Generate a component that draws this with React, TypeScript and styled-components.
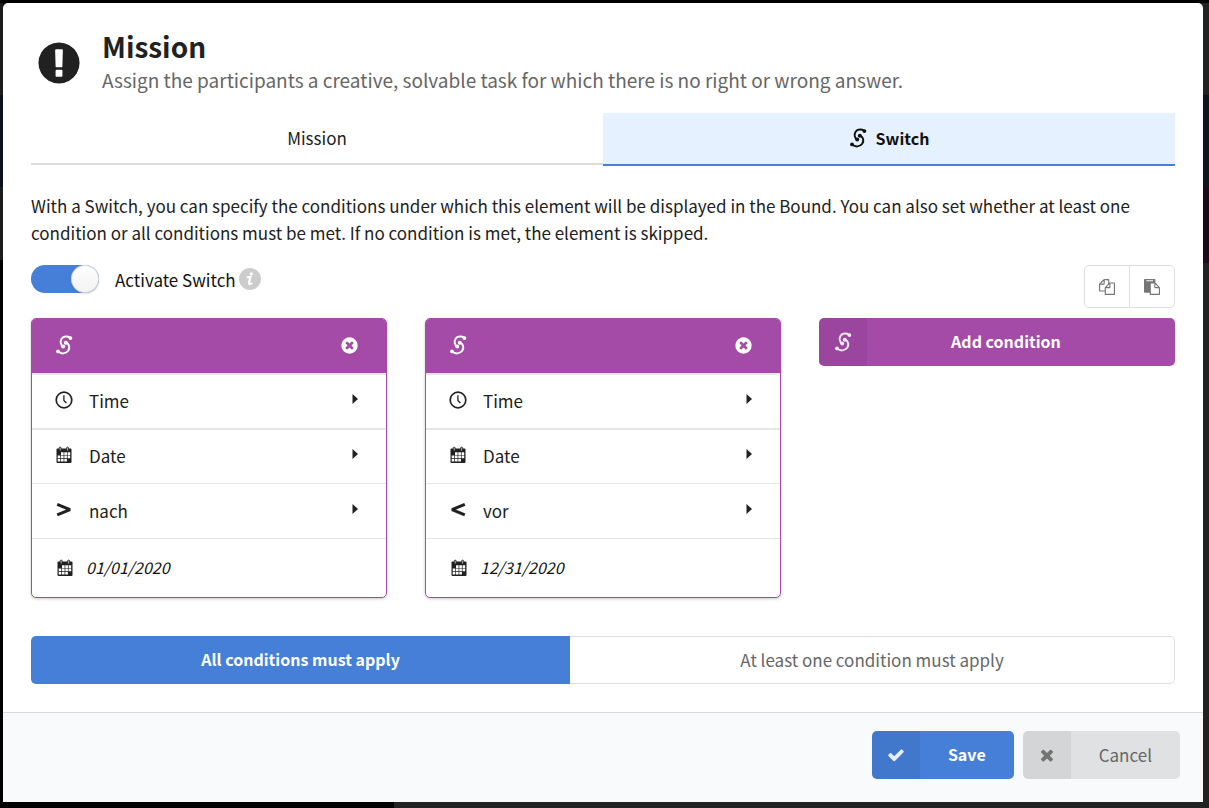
import React, { useState } from "react";
import styled, { createGlobalStyle, css } from "styled-components";

const blue = "#457fd7";
const purple = "#a44aa7";
const line = "#e0e1e2";

const GlobalStyle = createGlobalStyle`
  *, *::before, *::after { box-sizing: border-box; }
  body {
    margin: 0;
    background: linear-gradient(90deg, #000 394px, #222 394px);
    color: #212121;
    font-family: "Noto Sans CJK SC", "Open Sans", sans-serif;
    font-size: 17px;
    line-height: 27px;
  }
  button, input { font: inherit; color: inherit; margin: 0; }
  button { cursor: pointer; border: 0; padding: 0; background: none; }
  p, h1 { margin: 0; }
`;

const Backdrop = styled.div`
  padding: 3px 6px 6px 3px;
  background:
    linear-gradient(#000, #000) top / 100% 3px no-repeat,
    linear-gradient(#1c1c1c 95px, #0a111c 95px 187px, #1c1c1c 187px 260px, #000 260px) left / 3px 100% no-repeat,
    linear-gradient(#222 95px, #0d141f 95px 187px, #1c0a1a 187px 263px, #222 263px) right / 6px 100% no-repeat;
`;

const Modal = styled.main`
  border-radius: 5px 5px 0 0;
  background: #fff;
  overflow: hidden;
`;

const Content = styled.div`
  padding: 28px;
`;

const Header = styled.header`
  display: flex;
  align-items: center;
  gap: 19px;
  padding-left: 4px;
  height: 64px;
`;

const Title = styled.h1`
  font-size: 28px;
  line-height: 30px;
  font-weight: 700;
`;

const Subtitle = styled.p`
  margin-top: 4px;
  font-size: 19px;
  line-height: 30px;
  color: #666;
`;

const TabList = styled.div`
  display: flex;
  align-items: flex-start;
  margin-top: 18px;
`;

const Tab = styled.button<{ $active?: boolean }>`
  flex: 1;
  display: flex;
  align-items: center;
  justify-content: center;
  gap: 9px;
  height: 52px;
  padding-bottom: 1px;
  border-bottom: 2px solid #dcddde;
  ${(p) =>
    p.$active &&
    css`
      height: 53px;
      background: #e5f1ff;
      border-color: ${blue};
      color: #111;
      font-size: 16px;
      font-weight: 700;
    `}
`;

const Intro = styled.p`
  margin-top: 26px;
`;

const Controls = styled.div`
  display: flex;
  justify-content: space-between;
  align-items: flex-start;
  margin-top: 19px;
`;

const ToggleLabel = styled.label`
  display: flex;
  align-items: center;
  height: 28px;
  color: #111;
  cursor: pointer;
`;

const Toggle = styled.input`
  appearance: none;
  width: 68px;
  height: 28px;
  margin-right: 16px;
  border-radius: 14px;
  background: #ddd;
  display: flex;
  justify-content: flex-start;
  cursor: pointer;
  &::before {
    content: "";
    width: 28px;
    height: 28px;
    border-radius: 50%;
    background: linear-gradient(#fff, #f2f2f2);
    box-shadow: 0 1px 2px rgba(34, 36, 38, 0.15), 0 0 0 1px rgba(34, 36, 38, 0.15) inset;
  }
  &:checked {
    background: ${blue};
    justify-content: flex-end;
  }
`;

const Info = styled.svg`
  margin-left: 3px;
`;

const IconGroup = styled.div`
  display: flex;
  height: 43px;
  border: 1px solid #dededf;
  border-radius: 5px;
  color: #767676;
`;

const IconButton = styled.button`
  display: grid;
  place-items: center;
  width: 44px;
  & + & {
    width: 45px;
    border-left: 1px solid #dededf;
  }
`;

const Columns = styled.div`
  display: grid;
  grid-template-columns: repeat(3, 1fr);
  align-items: start;
  gap: 38px;
  margin-top: 10px;
`;

const Card = styled.section`
  border: 1px solid ${purple};
  border-radius: 5px;
  overflow: hidden;
  box-shadow: 0 1px 3px rgba(34, 36, 38, 0.25);
`;

const CardHead = styled.div`
  display: flex;
  align-items: center;
  justify-content: space-between;
  height: 54px;
  padding: 0 27px 2px 23px;
  background: ${purple};
  color: #fff;
`;

const RemoveButton = styled.button`
  display: flex;
`;

const Row = styled.button<{ $rule: number }>`
  display: flex;
  align-items: center;
  width: 100%;
  height: 55px;
  padding: 0 28px 2px 23px;
  border-top: ${(p) => p.$rule}px solid #e6e6e6;
  text-align: left;
`;

const RowIcon = styled.span`
  display: flex;
  width: 34px;
  padding-bottom: 2px;
`;

const Caret = styled.svg`
  margin-left: auto;
  margin-bottom: 3px;
`;

const DateRow = styled.label`
  display: flex;
  align-items: center;
  gap: 12px;
  height: 59px;
  padding: 0 24px;
  border-top: 1px solid #e6e6e6;
`;

const DateInput = styled.input`
  flex: 1;
  min-width: 0;
  padding: 0 0 2px;
  border: 0;
  outline: 0;
  background: none;
  font-size: 16px;
  font-style: italic;
  color: #111;
`;

const LabeledButton = styled.button<{ $tone: "purple" | "blue" | "grey" }>`
  display: flex;
  align-items: stretch;
  height: 48px;
  border-radius: 5px;
  overflow: hidden;
  background: ${(p) => ({ purple, blue, grey: line })[p.$tone]};
  color: #fff;
  font-size: 16px;
  font-weight: 700;
  ${(p) =>
    p.$tone === "grey" &&
    css`
      color: #666;
      font-size: 17px;
      font-weight: 400;
    `}
`;

const ButtonIcon = styled.span`
  display: grid;
  place-items: center;
  width: 48px;
  background: rgba(0, 0, 0, 0.05);
  svg { opacity: 0.88; }
`;

const ButtonText = styled.span<{ $wide?: boolean }>`
  flex: 1;
  align-self: center;
  padding: 0 ${(p) => (p.$wide ? 58 : 28)}px 2px 28px;
`;

const Choice = styled.div`
  display: flex;
  margin-top: 38px;
`;

const ChoiceButton = styled.button<{ $active?: boolean }>`
  flex: 1 1 auto;
  height: 48px;
  padding: 0 28px 2px;
  border: 1px solid ${line};
  border-left: 0;
  border-radius: 0 5px 5px 0;
  color: #666;
  ${(p) =>
    p.$active &&
    css`
      border: 0;
      border-radius: 5px 0 0 5px;
      background: ${blue};
      color: #fff;
      font-size: 16px;
      font-weight: 700;
    `}
`;

const Footer = styled.footer`
  display: flex;
  justify-content: flex-end;
  gap: 9px;
  padding: 18px 23px 23px;
  border-top: 1px solid #d7dadd;
  background: #f9fafc;
`;

const SwitchIcon = () => (
  <svg width="18" height="20" viewBox="0 0 18 20" fill="none" stroke="currentColor" strokeWidth="2" strokeLinecap="round" aria-hidden="true">
    <path d="M15.3 2.8C12.5 0.9 8.4 0.9 6.6 3.8C5 6.6 5.6 9.8 8.1 11.6" />
    <path d="M10.9 7.4C14.4 8.8 15.2 12.6 13.2 15.8C10.9 19.1 6 19.1 3.2 16.6" />
    <g fill="currentColor" stroke="none">
      <circle cx="15.4" cy="3.1" r="1.9" />
      <circle cx="8.2" cy="11.5" r="2" />
      <circle cx="10.8" cy="7.7" r="2" />
      <circle cx="3" cy="16.4" r="1.9" />
    </g>
  </svg>
);

const Glyph = ({ d, size }: { d: string; size: number }) => (
  <svg width={size} height={size} viewBox="0 0 1792 1792" fill="currentColor" aria-hidden="true">
    <path d={d} />
  </svg>
);

const glyphs = {
  alert:
    "M896 128q209 0 385.5 103t279.5 279.5 103 385.5-103 385.5-279.5 279.5-385.5 103-385.5-103-279.5-279.5-103-385.5 103-385.5 279.5-279.5 385.5-103zm128 1247v-190q0-14-9-23.5t-22-9.5h-192q-13 0-23 10t-10 23v190q0 13 10 23t23 10h192q13 0 22-9.5t9-23.5zm-2-344l18-621q0-12-10-18-10-8-24-8h-220q-14 0-24 8-10 6-10 18l17 621q0 10 10 17.5t24 7.5h185q14 0 23.5-7.5t10.5-17.5z",
  check:
    "M1671 566q0 40-28 68l-724 724-136 136q-28 28-68 28t-68-28l-136-136-362-362q-28-28-28-68t28-68l136-136q28-28 68-28t68 28l294 295 656-657q28-28 68-28t68 28l136 136q28 28 28 68z",
  times:
    "M1490 1322q0 40-28 68l-136 136q-28 28-68 28t-68-28l-294-294-294 294q-28 28-68 28t-68-28l-136-136q-28-28-28-68t28-68l294-294-294-294q-28-28-28-68t28-68l136-136q28-28 68-28t68 28l294 294 294-294q28-28 68-28t68 28l136 136q28 28 28 68t-28 68l-294 294 294 294q28 28 28 68z",
  remove:
    "M1277 1122q0-26-19-45l-181-181 181-181q19-19 19-45 0-27-19-46l-90-90q-19-19-46-19-26 0-45 19l-181 181-181-181q-19-19-45-19-27 0-46 19l-90 90q-19 19-19 46 0 26 19 45l181 181-181 181q-19 19-19 45 0 27 19 46l90 90q19 19 46 19 26 0 45-19l181-181 181 181q19 19 45 19 27 0 46-19l90-90q19-19 19-46zm387-226q0 209-103 385.5t-279.5 279.5-385.5 103-385.5-103-279.5-279.5-103-385.5 103-385.5 279.5-279.5 385.5-103 385.5 103 279.5 279.5 103 385.5z",
  copy:
    "M1696 384q40 0 68 28t28 68v1216q0 40-28 68t-68 28h-960q-40 0-68-28t-28-68v-288h-544q-40 0-68-28t-28-68v-672q0-40 20-88t48-76l408-408q28-28 76-48t88-20h416q40 0 68 28t28 68v328q68-40 128-40h416zm-544 213l-299 299h299v-299zm-640-384l-299 299h299v-299zm196 647l316-316v-416h-384v416q0 40-28 68t-68 28h-416v640h512v-256q0-40 20-88t48-76zm956 804v-1152h-384v416q0 40-28 68t-68 28h-416v640h896z",
  paste:
    "M768 1664h896v-640h-416q-40 0-68-28t-28-68v-416h-384v1152zm256-1440v-64q0-13-9.5-22.5t-22.5-9.5h-704q-13 0-22.5 9.5t-9.5 22.5v64q0 13 9.5 22.5t22.5 9.5h704q13 0 22.5-9.5t9.5-22.5zm256 672h299l-299-299v299zm512 128v672q0 40-28 68t-68 28h-960q-40 0-68-28t-28-68v-160h-544q-40 0-68-28t-28-68v-1344q0-40 28-68t68-28h1088q40 0 68 28t28 68v328q21 13 36 28l408 408q28 28 48 76t20 88z",
};

const ClockIcon = () => (
  <svg width="18" height="18" viewBox="0 0 18 18" fill="none" stroke="currentColor" aria-hidden="true">
    <circle cx="9" cy="9" r="7.8" strokeWidth="1.7" />
    <path d="M8.9 4.2V9.4L11.4 12" strokeWidth="1.3" />
  </svg>
);

const CalendarIcon = () => (
  <svg width="18" height="18" viewBox="0 0 18 18" aria-hidden="true">
    <path d="M2.5 2.5H15.5Q16.5 2.5 16.5 3.5V16Q16.5 17 15.5 17H2.5Q1.5 17 1.5 16V3.5Q1.5 2.5 2.5 2.5Z" fill="currentColor" />
    <g fill="#fff">
      <path d="M6 6.3h2.6v2.6H6zM9.3 6.3h2.6v2.6H9.3zM12.6 6.3h2.6v2.6h-2.6z" />
      <path d="M2.7 9.6h2.6v2.6H2.7zM6 9.6h2.6v2.6H6zM9.3 9.6h2.6v2.6H9.3zM12.6 9.6h2.6v2.6h-2.6z" />
      <path d="M2.7 12.9h2.6v2.6H2.7zM6 12.9h2.6v2.6H6zM9.3 12.9h2.6v2.6H9.3z" />
    </g>
    <g fill="#aaa" stroke="currentColor" strokeWidth="0.8">
      <rect x="4.2" y="1.1" width="2" height="4" rx="1" />
      <rect x="11.6" y="1.1" width="2" height="4" rx="1" />
    </g>
  </svg>
);

const CompareIcon = ({ after }: { after: boolean }) => (
  <svg width="18" height="18" viewBox="0 0 18 18" fill="none" stroke="currentColor" strokeWidth="3" aria-hidden="true">
    <path d={after ? "M2.2 4.3L15 9.6L2.2 14.9" : "M15.8 4.3L3 9.6L15.8 14.9"} strokeLinejoin="bevel" />
  </svg>
);

const CaretIcon = () => (
  <Caret width="6" height="10" viewBox="0 0 6 10" fill="currentColor" aria-hidden="true">
    <path d="M0.5 0L6 5L0.5 10Z" />
  </Caret>
);

const ConditionCard = ({ after, label, date }: { after: boolean; label: string; date: string }) => (
  <Card>
    <CardHead>
      <SwitchIcon />
      <RemoveButton aria-label="Remove condition">
        <Glyph d={glyphs.remove} size={19} />
      </RemoveButton>
    </CardHead>
    <Row $rule={2}>
      <RowIcon><ClockIcon /></RowIcon>
      Time
      <CaretIcon />
    </Row>
    <Row $rule={2}>
      <RowIcon><CalendarIcon /></RowIcon>
      Date
      <CaretIcon />
    </Row>
    <Row $rule={1}>
      <RowIcon><CompareIcon after={after} /></RowIcon>
      {label}
      <CaretIcon />
    </Row>
    <DateRow>
      <CalendarIcon />
      <DateInput type="text" defaultValue={date} aria-label="Condition date" />
    </DateRow>
  </Card>
);

export default function App() {
  const [active, setActive] = useState(true);
  return (
    <>
      <GlobalStyle />
      <Backdrop>
        <Modal>
          <Content>
            <Header>
              <Glyph d={glyphs.alert} size={48} />
              <div>
                <Title>Mission</Title>
                <Subtitle>Assign the participants a creative, solvable task for which there is no right or wrong answer.</Subtitle>
              </div>
            </Header>
            <TabList role="tablist">
              <Tab role="tab" aria-selected={false}>Mission</Tab>
              <Tab role="tab" aria-selected $active>
                <SwitchIcon />
                Switch
              </Tab>
            </TabList>
            <Intro>
              With a Switch, you can specify the conditions under which this element will be displayed in the Bound. You can also set
              whether at least one condition or all conditions must be met. If no condition is met, the element is skipped.
            </Intro>
            <Controls>
              <ToggleLabel>
                <Toggle type="checkbox" checked={active} onChange={(e) => setActive(e.target.checked)} />
                Activate Switch
                <Info width="22" height="22" viewBox="0 0 22 22" aria-hidden="true">
                  <circle cx="11" cy="11" r="11" fill="#ccc" />
                  <g fill="none" stroke="#fff" strokeLinecap="round">
                    <path d="M8.6 9.3L11.4 8.9L9.9 15.2Q9.8 16.6 12.6 15.6" strokeWidth="2.1" />
                    <circle cx="12.3" cy="5.8" r="0.9" strokeWidth="1.5" />
                  </g>
                </Info>
              </ToggleLabel>
              <IconGroup>
                <IconButton aria-label="Copy conditions"><Glyph d={glyphs.copy} size={16} /></IconButton>
                <IconButton aria-label="Paste conditions"><Glyph d={glyphs.paste} size={16} /></IconButton>
              </IconGroup>
            </Controls>
            <Columns>
              <ConditionCard after label="nach" date="01/01/2020" />
              <ConditionCard after={false} label="vor" date="12/31/2020" />
              <LabeledButton $tone="purple">
                <ButtonIcon><SwitchIcon /></ButtonIcon>
                <ButtonText $wide>Add condition</ButtonText>
              </LabeledButton>
            </Columns>
            <Choice>
              <ChoiceButton $active>All conditions must apply</ChoiceButton>
              <ChoiceButton>At least one condition must apply</ChoiceButton>
            </Choice>
          </Content>
          <Footer>
            <LabeledButton $tone="blue">
              <ButtonIcon><Glyph d={glyphs.check} size={18} /></ButtonIcon>
              <ButtonText>Save</ButtonText>
            </LabeledButton>
            <LabeledButton $tone="grey">
              <ButtonIcon><Glyph d={glyphs.times} size={18} /></ButtonIcon>
              <ButtonText>Cancel</ButtonText>
            </LabeledButton>
          </Footer>
        </Modal>
      </Backdrop>
    </>
  );
}
